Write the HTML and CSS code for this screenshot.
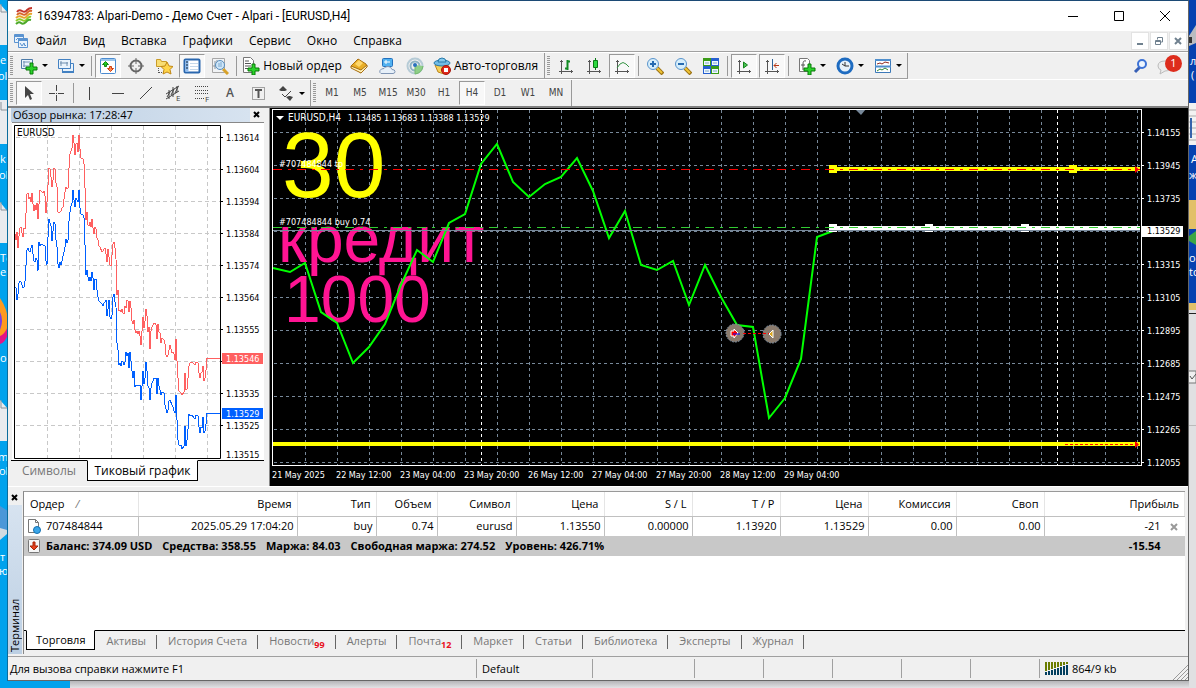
FILE: index.html
```html
<!DOCTYPE html>
<html lang="ru">
<head>
    <meta charset="utf-8">
    <title>16394783: Alpari-Demo - Демо Счет - Alpari - [EURUSD,H4]</title>
    <link rel="stylesheet" href="styles.css">
</head>
<body>
<div class="desktop">
    <svg class="desk-left" width="8" height="688">
        <rect width="8" height="688" fill="#00a2ed"/>
        <path d="M0 4l8 9v32H0zM0 100h8v44H0zM0 202l8 10v31H0zM0 400l8 9v32H0z" fill="#e9ebee"/>
        <path d="M1 4v8h6M1 102v8h6M1 202v8h6M1 400v8h6" fill="none" stroke="#8b9298"/>
        <path d="M0 298q8 12 8 24t-8 20z" fill="#ff9a1f"/><path d="M0 312q4 8 0 18z" fill="#7b3fe0"/><path d="M0 336q5-2 8-10v8q-3 9-8 10z" fill="#e31587"/>
        <path d="M0 506l8 5v18l-8 6z" fill="#4b97d8"/><path d="M0 528l7 2v4l-7 6z" fill="#d4dbe0"/>
        <g class="desk-text"><text x="0" y="64">er</text><text x="-2" y="80">olk</text><text x="0" y="163">k</text><text x="-1" y="179">olk</text><text x="0" y="262">То</text><text x="0" y="276">er</text><text x="0" y="362">ox</text><text x="-2" y="461">m</text><text x="-1" y="475">olk</text><text x="0" y="561">т</text><text x="-1" y="575">ю</text></g>
        <rect x="7" width="1" height="681" fill="#0b6c9c"/>
    </svg>

    <div class="window">
        <header class="titlebar">
            <svg class="logo" width="18" height="18" viewBox="0 0 18 18" fill="none" stroke-width="2">
                <path d="M2 5q2-3 5-1t5-1q2-2 5-2" stroke="#c3352b"/><path d="M2 8q2-3 5-1t5-1q2-3 5-2" stroke="#d9642a"/><path d="M1 11q3-3 6-1t5-1q2-3 5-2" stroke="#e7a52c"/><path d="M1 14q3-3 6-1t5-1q2-3 4-2" stroke="#8ccc29"/><path d="M1 17q3-3 5-1t5-1q2-3 5-2" stroke="#4ca82a"/>
            </svg>
            <h1>16394783: Alpari-Demo - Демо Счет - Alpari - [EURUSD,H4]</h1>
            <button class="caption" aria-label="Свернуть"><svg width="12" height="12"><path d="M1 6.500h10" stroke="#000"/></svg></button>
            <button class="caption" aria-label="Развернуть"><svg width="12" height="12"><path d="M1.500 1.500h9v9h-9z" stroke="#000" fill="none"/></svg></button>
            <button class="caption" aria-label="Закрыть"><svg width="12" height="12"><path d="M1 1l10 10M11 1L1 11" stroke="#000"/></svg></button>
        </header>

        <nav class="menubar">
            <svg width="14" height="14" viewBox="0 0 14 14" fill="#eaf3fc" stroke="#5b93d0"><path d="M.5.5h9v8h-9z"/><path d="M.5 2h9" stroke-width="2"/><path d="M2 6l2-2 2 2"/><path d="M4.500 4.500h9v9h-9z"/><path d="M4.500 6h9" stroke-width="2"/><path d="M6 9l2 3 2-3 1 3 1-1" fill="none"/></svg>
            <button>Файл</button><button>Вид</button><button>Вставка</button><button>Графики</button><button>Сервис</button><button>Окно</button><button>Справка</button>
            <div class="mdi">
                <button aria-label="Свернуть график"><svg width="10" height="10"><path d="M2 8h6" stroke="#70818f" stroke-width="2"/></svg></button>
                <button aria-label="Восстановить график"><svg width="10" height="10" fill="none" stroke="#70818f"><path d="M3.500 3.500v-2h5V6H7M1.500 4.500h5v4h-5zM1 5.500h5"/></svg></button>
                <button aria-label="Закрыть график"><svg width="10" height="10"><path d="M2 2l6 6M8 2L2 8" stroke="#70818f" stroke-width="2"/></svg></button>
            </div>
        </nav>

        <div class="toolbars">
            <div class="toolbar">
                <span class="grip"></span>
                <button class="tool drop" aria-label="Новый график"><svg width="18" height="18"><path d="M1.500 2.500h11v9h-11z" fill="#e9f3fc" stroke="#4d7ba8"/><path d="M4 4v6M3 5h7M3 9h6" stroke="#7292b5"/><path d="M10 6h3v4h4v3h-4v4h-3v-4H6v-3h4z" fill="#2bd22b" stroke="#087a08"/></svg></button>
                <button class="tool drop" aria-label="Профили"><svg width="18" height="18" fill="#e9f3fc" stroke="#4381c2"><path d="M5.500 6.500h11v9h-11z"/><path d="M5 15h12" stroke-width="2"/><path d="M1.500 2.500h12v9h-12z"/><path d="M4 4v5M3 6h8M10 5v4" stroke="#6f8eae"/></svg></button>
                <span class="sep"></span>
                <button class="tool pressed" aria-label="Обзор рынка"><svg width="18" height="18"><rect x="1.500" y="1.500" width="15" height="15" rx="1" fill="#fff" stroke="#4b8bd0"/><path d="M2 3h14" stroke="#9cc6ec" stroke-width="2"/><path d="M6.500 4.500l3 3h-2v2h-2v-2h-2z" fill="#21cd21" stroke="#118811"/><path d="M11.500 14.500l3-3h-2v-2h-2v2h-2z" fill="#ff8850" stroke="#cf3c0e"/></svg></button>
                <button class="tool" aria-label="Окно данных"><svg width="18" height="18" fill="none" stroke="#666"><circle cx="9" cy="9" r="5.500" stroke-width="2"/><path d="M9 1v6M9 11v6M1 9h6M11 9h6"/></svg></button>
                <button class="tool" aria-label="Навигатор"><svg width="18" height="18"><path d="M1.500 2.500h4l1 2h5v5h-10z" fill="#f8dd73" stroke="#c99b28"/><path d="M3.500 11v5M4 15.500h6" stroke="#555" stroke-dasharray="1 1"/><path d="M12 5l2 4 4 .5-3 3 1 4.500-4-2-4 2 1-4.500-3-3L10 9z" fill="#ffd54a" stroke="#c08716"/></svg></button>
                <button class="tool pressed" aria-label="Терминал"><svg width="18" height="18"><rect x="1.500" y="2.500" width="15" height="13" rx="1" fill="#fff" stroke="#2a67ae" stroke-width="2"/><path d="M4 3v12" stroke="#8fbcf0" stroke-width="3"/><path d="M3 5h2M3 8h2M3 11h2" stroke="#123"/><path d="M7 6.500h8M7 9.500h8M7 12.500h8" stroke="#c6d8ea"/></svg></button>
                <button class="tool" aria-label="Тестер стратегий"><svg width="18" height="18"><path d="M1.500 1.500h12v14h-12z" fill="#f1f3f5" stroke="#a7a7a7"/><path d="M4 4v8M2 9h3M6 3v4" stroke="#8b959e"/><path d="M12 12l5 5" stroke="#d7a129" stroke-width="3"/><circle cx="9" cy="8" r="4.500" fill="#cfe6f8" stroke="#578dbd"/><path d="M8 6v4M10 5v5" stroke="#7aa8ce"/></svg></button>
                <span class="sep"></span>
                <button class="tool text order"><svg width="18" height="18"><path d="M1.500.5h7l3 3v12h-10z" fill="#fff" stroke="#777"/><path d="M3 4h4M3 6.500h6M3 9h6M3 11.500h4" stroke="#555"/><path d="M10 7h3v4h4v3h-4v4h-3v-4H6v-3h4z" fill="#2bd22b" stroke="#087a08"/></svg>Новый ордер</button>
                <button class="tool" aria-label="MetaEditor"><svg width="18" height="18"><path d="M1 9L8 2l8 5 1 3-6 6z" fill="#e8ae27" stroke="#a96e10"/><path d="M1 9l10 4 6-5v2l-6 6L1 11z" fill="#fff2b9" stroke="#a96e10"/><path d="M5 7l4-4 4 3-4 4z" fill="#ffd76a"/></svg></button>
                <button class="tool" aria-label="VPS"><svg width="18" height="18"><rect x="4.500" y="1.500" width="10" height="8" rx="1" fill="#51b1f0" stroke="#2270be"/><path d="M6 5h6M8 3v4" stroke="#fff"/><path d="M3 16.500q-2-1-1-3t4-2q1-2 4-2t4 3q3 0 3 2t-2 2z" fill="#e7f0f9" stroke="#8096b5"/></svg></button>
                <button class="tool" aria-label="Сигналы"><svg width="18" height="18" fill="none"><circle cx="9" cy="9" r="7.500" stroke="#b6cbd6" stroke-width="2"/><circle cx="9" cy="9" r="4.500" stroke="#8eb3c3" stroke-width="2"/><path d="M9 8v9q7-1 8-8" fill="#8fcf88" stroke="#74ba6d"/><circle cx="9" cy="8" r="2" fill="#2b72bd"/></svg></button>
                <button class="tool text auto"><svg width="18" height="18"><path d="M2 8l14 1-5 8-6-2z" fill="#f6d057" stroke="#bd861e"/><ellipse cx="9" cy="6" rx="8" ry="3" fill="#72bce6" stroke="#287aaa"/><path d="M5 5q0-4 4-4t4 4z" fill="#84c9ed" stroke="#287aaa"/><circle cx="13" cy="13" r="4.500" fill="#df2618" stroke="#a61a10"/><path d="M11 11h4v4h-4z" fill="#fff"/></svg>Авто-торговля</button>
            </div>
            <div class="toolbar charts">
                <span class="grip"></span>
                <button class="tool" aria-label="Бары"><svg class="axes" width="18" height="18"><path d="M4.500 3v14M2 14.500h14M3 4.500h3M14.500 13v3"/><path d="M10.500 3v10M8 11.500h2M11 4.500h2" stroke="#118a22" stroke-width="2"/></svg></button>
                <button class="tool" aria-label="Свечи"><svg class="axes" width="18" height="18"><path d="M4.500 3v14M2 14.500h14M3 4.500h3M14.500 13v3"/><path d="M10.500 1v12" stroke="#087b14"/><path d="M8.500 3.500h4v7h-4z" fill="#2bd93e" stroke="#087b14"/></svg></button>
                <button class="tool pressed" aria-label="Линия"><svg class="axes" width="18" height="18"><path d="M4.500 3v14M2 14.500h14M3 4.500h3M14.500 13v3"/><path d="M4 11l3-4q3-3 6 0l3 3" stroke="#369545"/></svg></button>
                <span class="sep"></span>
                <button class="tool" aria-label="Увеличить"><svg width="18" height="18"><path d="M11 11l6 6" stroke="#9d7416" stroke-width="4"/><path d="M11 11l5 5" stroke="#f0c436" stroke-width="2"/><circle cx="7" cy="7" r="5.500" fill="#d6eefb" stroke="#5a94cc"/><path d="M7 4v6M4 7h6" stroke="#266bb1" stroke-width="2"/></svg></button>
                <button class="tool" aria-label="Уменьшить"><svg width="18" height="18"><path d="M11 11l6 6" stroke="#9d7416" stroke-width="4"/><path d="M11 11l5 5" stroke="#f0c436" stroke-width="2"/><circle cx="7" cy="7" r="5.500" fill="#d6eefb" stroke="#5a94cc"/><path d="M4 7h6" stroke="#266bb1" stroke-width="2"/></svg></button>
                <button class="tool" aria-label="Окна мозаикой"><svg width="18" height="18"><path d="M1 1h8v8H1zM9 9h8v8H9z" fill="#3b9b18"/><path d="M9 1h8v8H9zM1 9h8v8H1z" fill="#265fd0"/><path d="M2 4h6v4H2zM10 4h6v4h-6zM2 12h6v4H2zM10 12h6v4h-6z" fill="#eef7ff"/><path d="M3 6h4M11 6h4M3 14h4M11 14h4" stroke="#80a8c8"/></svg></button>
                <span class="sep"></span>
                <button class="tool pressed" aria-label="Автопрокрутка"><svg class="axes" width="18" height="18"><path d="M4.500 3v14M2 14.500h14M3 4.500h3M14.500 13v3"/><path d="M8.500 5v6l4-3z" fill="#49c252" stroke="#16851f"/></svg></button>
                <button class="tool pressed" aria-label="Сдвиг графика"><svg class="axes" width="18" height="18"><path d="M4.500 3v14M2 14.500h14M3 4.500h3M14.500 13v3"/><path d="M9.500 2v11" stroke="#2d6396"/><path d="M11 8.500h5M13.500 6L11 8.500l2.500 2.500" stroke="#b73714"/></svg></button>
                <span class="sep"></span>
                <button class="tool drop" aria-label="Индикаторы"><svg width="18" height="18"><path d="M1.500 1.500h8l2 2v11h-10z" fill="#fff" stroke="#777"/><path d="M8 4q-3-1-3 3v6M3 8h4" fill="none" stroke="#555"/><path d="M10 7h3v4h4v3h-4v4h-3v-4H6v-3h4z" fill="#2bd22b" stroke="#087a08"/></svg></button>
                <button class="tool drop" aria-label="Периоды"><svg width="18" height="18"><circle cx="9" cy="9" r="7" fill="#e6f1fa" stroke="#1e6bc0" stroke-width="3"/><path d="M9 5v4h4M6 7l3 2" fill="none" stroke="#333"/></svg></button>
                <button class="tool drop" aria-label="Шаблоны"><svg width="18" height="18"><path d="M1.500 2.500h15v13h-15z" fill="#fff" stroke="#3c79b8"/><path d="M1 3h16M1 9.500h16" stroke="#508fcd" stroke-width="2"/><path d="M3 7l3-1 2 1 3-2 4 1" fill="none" stroke="#8e2b20"/><path d="M3 14l3-2 2 1 3-2 3 2" fill="none" stroke="#2e8534"/></svg></button>
            </div>
            <div class="tray">
                <button aria-label="Поиск"><svg width="16" height="16"><path d="M7 9l-5 5" stroke="#375fb5" stroke-width="3"/><circle cx="9" cy="6" r="4" fill="#edf5ff" stroke="#3c72d6" stroke-width="2"/></svg></button>
                <button class="news" aria-label="Сообщения"><svg width="18" height="18"><path d="M8 4q6 0 6 5t-6 5l-5 3 1-4q-3-1-3-4 0-5 7-5z" fill="#ececec" stroke="#bbb"/></svg><span>1</span></button>
            </div>
        </div>

        <div class="toolbars">
            <div class="toolbar second">
                <span class="grip"></span>
                <button class="tool pressed" aria-label="Курсор"><svg width="18" height="18"><path d="M5 2v12l3-3 2 5 2-1-2-5h4z" fill="#444"/></svg></button>
                <button class="tool" aria-label="Перекрестие"><svg width="18" height="18" stroke="#444"><path d="M8.500 1v6M8.500 11v6M1 9.500h6M10 9.500h6M8 9.500h1"/></svg></button>
                <span class="sep"></span>
                <button class="tool" aria-label="Вертикальная линия"><svg width="18" height="18"><path d="M8.500 3v13" stroke="#444"/></svg></button>
                <button class="tool" aria-label="Горизонтальная линия"><svg width="18" height="18"><path d="M3 9.500h12" stroke="#444"/></svg></button>
                <button class="tool" aria-label="Трендовая линия"><svg width="18" height="18"><path d="M3 15L15 3" stroke="#444"/></svg></button>
                <button class="tool" aria-label="Канал"><svg width="18" height="18" stroke="#444"><path d="M1 10L14 2M1 15l13-8M4 6v9M8 3v10M12 2v6"/><path d="M2 13l3-5M6 11l3-6M10 9l3-6"/><text x="11" y="17" class="glyph">E</text></svg></button>
                <button class="tool" aria-label="Фибоначчи"><svg width="18" height="18"><path d="M2 2.500h14M2 6.500h14M2 9.500h14M2 14.500h9" stroke="#444" stroke-dasharray="1 1"/><text x="12" y="18" class="glyph">F</text></svg></button>
                <button class="tool letter">A</button>
                <button class="tool" aria-label="Метка"><svg width="18" height="18"><path d="M3.500 3.500h12v12h-12z" fill="none" stroke="#555" stroke-dasharray="1 1"/><path d="M6 6h7M9.500 6v8" stroke="#555" stroke-width="2"/></svg></button>
                <button class="tool drop" aria-label="Стрелки"><svg width="18" height="18" fill="#444"><path d="M2 6l4-4 4 4-2 1H4zM9 13l3-1h1l3 1-3 4z"/><path d="M5 10l3 3 6-6" fill="none" stroke="#444"/></svg></button>
            </div>
            <div class="toolbar second periods">
                <span class="grip"></span>
                <button class="tool">M1</button><button class="tool">M5</button><button class="tool">M15</button><button class="tool">M30</button><button class="tool">H1</button><button class="tool pressed">H4</button><button class="tool">D1</button><button class="tool">W1</button><button class="tool">MN</button>
            </div>
        </div>

        <main class="workspace">
            <section class="watch">
                <div class="watch-head"><h2>Обзор рынка: 17:28:47</h2><button class="close" aria-label="Закрыть обзор рынка"><svg width="8" height="8"><path d="M1 1l5 5M6 1L1 6" stroke="#000" stroke-width="2"/></svg></button></div>
                <svg class="ticks" width="252" height="338">
                    <g transform="translate(-12 -123)">
                        <path class="tick-grid" d="M16 137.500h204M16 169.500h204M16 201.500h204M16 233.500h204M16 265.500h204M16 297.500h204M16 329.500h204M16 361.500h204M16 393.500h204M16 425.500h204M47.500 126v332M79.500 126v332M111.500 126v332M143.500 126v332M175.500 126v332M207.500 126v332"/>
                        <polyline class="ask" points="15,234 16,240 17,232 18,248 19,236 20,228 21,227 22,233 23,237 24,228 25,229 26,213 27,194 28,193 29,199 30,197 31,202 32,193 33,204 34,211 35,205 36,210 37,203 38,219 39,204 40,190 42,192 43,193 44,191 45,196 46,213 47,202 48,185 49,168 50,169 51,177 52,187 53,180 54,168 55,169 56,183 57,187 58,212 59,213 61,211 62,208 63,207 64,199 65,192 66,187 67,189 68,188 69,168 70,154 71,151 72,148 73,135 74,143 75,155 76,144 77,143 78,152 79,135 80,149 81,158 83,159 84,164 85,188 86,220 87,212 88,225 89,226 90,222 91,227 92,219 93,228 94,234 95,227 96,229 97,238 98,240 99,246 100,247 102,252 103,251 104,249 105,248 106,254 107,262 108,249 109,257 110,265 111,266 112,255 113,244 114,242 115,248 116,259 117,295 118,290 119,311 120,310 121,312 122,309 123,313 124,314 125,306 126,308 127,300 128,301 129,312 130,301 131,308 132,321 133,324 134,320 135,330 136,333 137,331 138,334 139,331 140,336 141,345 142,331 143,317 144,328 145,321 146,309 147,316 148,332 149,327 150,349 151,331 152,327 153,325 154,323 155,323 156,325 157,339 158,324 159,332 160,333 161,343 162,338 163,339 164,340 165,344 166,355 167,357 168,355 169,350 170,345 171,349 172,353 173,352 174,354 175,360 176,339 177,361 178,378 179,391 181,393 182,395 184,392 185,373 186,390 187,389 188,378 189,366 190,363 191,362 193,363 195,365 196,362 198,363 199,373 200,378 201,373 202,372 203,366 204,381 205,378 206,370 207,358 220,358"/>
                        <polyline class="bid" points="15,287 16,288 17,300 18,294 19,283 20,281 21,282 22,285 23,288 24,287 25,281 26,265 27,250 28,248 29,251 30,252 31,248 32,245 33,254 34,261 35,262 36,258 37,260 38,271 39,242 40,246 41,244 45,246 46,261 47,265 48,237 49,219 50,223 51,226 52,241 53,231 54,222 55,224 56,240 57,247 58,264 59,268 60,262 61,265 62,261 64,252 65,247 66,239 67,243 68,240 69,221 70,212 71,206 72,203 73,190 74,200 75,207 76,198 77,200 78,202 79,190 80,208 81,214 83,215 84,218 85,245 86,275 87,270 88,277 89,281 90,277 91,281 92,272 93,278 94,290 95,279 96,279 97,290 98,297 99,301 100,302 102,304 103,306 104,303 105,302 106,300 107,316 108,309 109,300 110,317 111,319 112,315 113,297 114,294 115,302 116,307 117,343 118,350 119,365 120,363 121,366 122,361 123,362 124,365 125,362 126,352 127,356 128,353 129,368 130,352 131,361 132,371 133,378 134,371 135,387 136,385 140,385 141,400 142,386 143,371 144,384 145,378 146,362 147,371 148,386 149,388 150,400 151,388 152,383 153,381 154,378 156,378 157,394 158,378 159,386 160,390 161,395 162,392 164,393 165,405 166,409 167,413 168,410 169,401 170,400 172,405 173,407 174,411 175,413 176,395 177,420 178,440 179,445 181,445 182,449 184,446 185,426 186,446 187,440 188,429 189,414 190,416 192,415 195,419 196,415 198,416 199,427 200,433 201,427 202,428 203,417 204,433 205,431 206,424 207,413 220,413"/>
                        <path d="M14.500 125.500h206v333h-206z" fill="none" stroke="#000"/>
                        <path d="M221 137.500h2M221 169.500h2M221 201.500h2M221 233.500h2M221 265.500h2M221 297.500h2M221 329.500h2M221 361.500h2M221 393.500h2M221 425.500h2" stroke="#000"/>
                        <g class="small">
                            <text x="17" y="136" class="symbol">EURUSD</text>
                            <text x="226" y="141">1.13614</text><text x="226" y="173">1.13604</text><text x="226" y="205">1.13594</text><text x="226" y="237">1.13584</text><text x="226" y="269">1.13574</text><text x="226" y="301">1.13564</text><text x="226" y="333">1.13555</text><text x="226" y="397">1.13535</text><text x="226" y="429">1.13525</text><text x="226" y="458">1.13515</text>
                            <rect x="222" y="353" width="41" height="11" fill="#ff6060"/><text x="226" y="362" fill="#fff">1.13546</text>
                            <rect x="222" y="408" width="41" height="11" fill="#0060ff"/><text x="226" y="417" fill="#fff">1.13529</text>
                        </g>
                    </g>
                </svg>
                <div class="watch-tabs"><button>Символы</button><button class="active">Тиковый график</button></div>
            </section>

            <section class="chart">
                <div class="plot">
                    <svg width="100%" height="357">
                        <g transform="translate(-272 -109)">
                            <path class="grid" d="M305.500 110v355M337.500 110v355M369.500 110v355M401.500 110v355M433.500 110v355M465.500 110v355M497.500 110v355M529.500 110v355M561.500 110v355M593.500 110v355M625.500 110v355M657.500 110v355M689.500 110v355M721.500 110v355M753.500 110v355M785.500 110v355M817.500 110v355M849.500 110v355M881.500 110v355M913.500 110v355M945.500 110v355M977.500 110v355M1009.500 110v355M1041.500 110v355M1073.500 110v355M1105.500 110v355M1137.500 110v355"/>
                            <path class="grid" d="M274 132.500h866M274 165.500h866M274 198.500h866M274 231.500h866M274 264.500h866M274 297.500h866M274 330.500h866M274 363.500h866M274 396.500h866M274 429.500h866M274 462.500h866"/>
                            <path class="week" d="M481.500 110v355M1057.500 110v355"/>
                            <text x="282" y="197" class="big yellow">30</text>
                            <text x="278" y="262" class="mid">кредит</text>
                            <text x="284" y="322" class="mid">1000</text>
                            <path d="M273 444h867M832 169h308" stroke="#ff0" stroke-width="4"/>
                            <path d="M829 165h8v8h-8zM1069 165h8v8h-8z" fill="#ff0"/>
                            <polyline class="price" points="273,268 290,272 305,263 321,312 337,323 353,363 369,347 385,324 401,285 417,250 433,262 449,223 465,214 481,164 497,144 513,182 529,197 545,184 561,177 577,158 593,191 609,238 625,211 641,265 657,270 673,261 689,305 705,265 721,297 737,325 753,327 769,418 785,398 801,359 817,237 833,231"/>
                            <path d="M829 224h8v8h-8zM925 224h8v8h-8zM1021 224h8v8h-8z" fill="#fff"/>
                            <path d="M832 228h308" stroke="#fff" stroke-width="4"/>
                            <path d="M273 230.500h867" stroke="#778899"/>
                            <path class="dashdot" d="M273 169.500h867" stroke="#f00"/>
                            <path class="dashdot" d="M273 227.500h867" stroke="#32cd32"/>
                            <path d="M1065 444.500h72" stroke="#f00" stroke-dasharray="3 2"/>
                            <path d="M1135 166l4 3.500-4 3.500zM1135 441l4 3.500-4 3.500z" fill="#f00"/>
                            <g fill="#8b7b6d" stroke="#8293a4" stroke-dasharray="2 1"><circle cx="735" cy="333" r="9"/><circle cx="772" cy="334" r="9"/></g>
                            <path d="M743 333.500h26" stroke="#f00" stroke-dasharray="3 2"/>
                            <path d="M731 331h3v-2l4 4-4 5v-2h-3z" fill="#f00" stroke="#fff"/><path d="M733 334h7" stroke="#00f"/>
                            <path d="M773 330v8l-4-4z" fill="#daa520" stroke="#fff"/>
                            <path d="M855 109h11l-5 6z" fill="#778899"/>
                            <path d="M276 116h8l-4 4z" fill="#fff"/>
                            <g class="small light">
                                <text x="288" y="121" class="symbol">EURUSD,H4</text><text x="348" y="121">1.13485 1.13683 1.13388 1.13529</text>
                                <text x="279" y="167">#707484844 tp</text>
                                <text x="279" y="225">#707484844 buy 0.74</text>
                            </g>
                        </g>
                        <rect width="100%" height="100%" fill="none" stroke="#fff" stroke-width="2"/>
                    </svg>
                </div>
                <div class="scale"><span>1.14155</span><span>1.13945</span><span>1.13735</span><span class="current"><b>1.13529</b></span><span>1.13315</span><span>1.13105</span><span>1.12895</span><span>1.12685</span><span>1.12475</span><span>1.12265</span><span>1.12055</span></div>
                <div class="times"><span>21 May 2025</span><span>22 May 12:00</span><span>23 May 04:00</span><span>23 May 20:00</span><span>26 May 12:00</span><span>27 May 04:00</span><span>27 May 20:00</span><span>28 May 12:00</span><span>29 May 04:00</span></div>
            </section>
        </main>

        <section class="terminal">
            <div class="term-side"><button class="close" aria-label="Закрыть терминал"><svg width="8" height="8"><path d="M1 1l5 5M6 1L1 6" stroke="#000" stroke-width="2"/></svg></button><h2>Терминал</h2></div>
            <div class="term-body">
                <div class="term-list">
                    <table>
                        <colgroup><col class="c-order"><col class="c-time"><col class="c-type"><col class="c-lots"><col class="c-type"><col class="c-num"><col class="c-num"><col class="c-num"><col class="c-num"><col class="c-num"><col class="c-num"><col></colgroup>
                        <thead><tr><th>Ордер <i>/</i></th><th>Время</th><th>Тип</th><th>Объем</th><th>Символ</th><th>Цена</th><th>S / L</th><th>T / P</th><th>Цена</th><th>Комиссия</th><th>Своп</th><th>Прибыль</th></tr></thead>
                        <tbody>
                            <tr><td><div class="cell"><svg width="15" height="16"><path d="M1.500 1.500h7l3 3v10h-10z" fill="#fff" stroke="#777"/><path d="M8.500 1.500v3h3" fill="none" stroke="#777"/><circle cx="10" cy="12" r="3.500" fill="#3aa5e8" stroke="#1470b0"/></svg>707484844</div></td><td>2025.05.29 17:04:20</td><td>buy</td><td>0.74</td><td>eurusd</td><td>1.13550</td><td>0.00000</td><td>1.13920</td><td>1.13529</td><td>0.00</td><td>0.00</td><td class="profit">-21<button aria-label="Закрыть ордер"><svg width="9" height="9"><path d="M1 1l6 6M7 1L1 7" stroke="#999" stroke-width="2"/></svg></button></td></tr>
                            <tr class="total"><td colspan="11"><div class="cell"><svg width="15" height="16"><rect x="1.500" y="1.500" width="11" height="13" rx="1" fill="#f6f6f6" stroke="#777"/><path d="M6 4h2v4h3l-4 4-4-4h3z" fill="#e8401c" stroke="#a62508"/></svg><span>Баланс: 374.09 USD</span><span>Средства: 358.55</span><span>Маржа: 84.03</span><span>Свободная маржа: 274.52</span><span>Уровень: 426.71%</span></div></td><td class="profit">-15.54</td></tr>
                        </tbody>
                    </table>
                </div>
                <div class="term-tabs">
                    <button class="active">Торговля</button><button>Активы</button><button>История Счета</button><button>Новости<sub>99</sub></button><button>Алерты</button><button>Почта<sub>12</sub></button><button>Маркет</button><button>Статьи</button><button>Библиотека</button><button>Эксперты</button><button>Журнал</button>
                </div>
            </div>
        </section>

        <footer class="status">
            <span class="help">Для вызова справки нажмите F1</span><span class="profile">Default</span><span class="s1"></span><span class="s2"></span><span class="s2"></span><span class="s2"></span><span class="s2"></span><span class="s2"></span>
            <span class="net"><svg width="23" height="13"><path d="M1 0v9M4 0v8M7 0v7M10 0v6M13 0v5M16 0v4M19 0v3M22 0v2" stroke="#6b7d00" stroke-width="2"/><path d="M1 10v3M4 9v4M7 8v5M10 7v6M13 6v7M16 5v8M19 4v9M22 3v10" stroke="#04405f" stroke-width="2"/></svg>864/9 kb</span>
            <svg class="sizer" width="15" height="15"><path d="M0 15L15 0M4 15L15 4M8 15l7-7M12 15l3-3" stroke="#999"/></svg>
        </footer>
    </div>

    <svg class="desk-right" width="7" height="688">
        <rect width="7" height="688" fill="#0642b0"/>
        <path d="M0 36l7-11v18l-7 3z" fill="#b9bcc0"/><path d="M0 37h3v6H0z" fill="#333"/>
        <path d="M0 103h7v42H0z" fill="#f2f2f2"/><path d="M0 110h7M0 116h7M0 122h7M0 128h7M0 134h7M0 140h7" stroke="#aaa"/><path d="M1 118h2v20H1z" fill="#3564ac"/>
        <path d="M0 200h7v29H0z" fill="#e2c069"/><path d="M0 236l7-5v14l-7-4z" fill="#3aa644"/>
        <path d="M0 303h7v7H0z" fill="#e2c069"/><path d="M0 310h7v378H0z" fill="#e0e0e2"/><path d="M0 313.500h7" stroke="#222"/><path d="M0 425.500h7" stroke="#bbb"/>
        <path d="M0 371h7v12H0" fill="#f0f0f0" stroke="#777"/><path d="M1 376l2 3 4-5" fill="none" stroke="#555"/>
        <g class="desk-text"><text x="1" y="65">л</text><text x="2" y="79">(</text><text x="2" y="163">A</text><text x="0" y="179">ж</text><text x="0" y="262">о</text><text x="0" y="276">tc</text></g>
    </svg>
    <div class="desk-bottom"></div>
</div>
</body>
</html>
```
FILE: styles.css
```css
* {
    box-sizing: border-box;
}
body {
    margin: 0;
    font-family: "Open Sans", "Noto Sans", sans-serif;
    font-size: 11px;
    line-height: 16px;
    color: #000;
    overflow: hidden;
}
h1, h2 {
    margin: 0;
    font-size: 11px;
    font-weight: normal;
}
button {
    padding: 0;
    border: none;
    background: none;
    font: inherit;
    color: inherit;
}
svg {
    display: block;
    flex: none;
}

/* desktop */
.desktop {
    display: grid;
    grid-template-columns: 8px 1fr 7px;
    grid-template-rows: 1fr 7px;
    height: 100vh;
    background: #e2e2e5;
}
.desk-left, .desk-right {
    grid-row: 1 / 3;
}
.desk-left {
    grid-column: 1;
}
.desk-right {
    grid-column: 3;
}
.desk-bottom {
    grid-column: 2;
    grid-row: 2;
    background: linear-gradient(to right, #00a2ed 62px, transparent 62px), linear-gradient(#b5b5b8, #e2e2e5);
}
.desk-text {
    font-size: 11px;
    fill: #fff;
}
.window {
    grid-column: 2;
    grid-row: 1;
    display: flex;
    flex-direction: column;
    min-width: 0;
    min-height: 0;
    background: #f0f0f0;
    border-top: 1px solid #1c4a75;
    border-right: 1px solid #666;
    border-bottom: 1px solid #666;
}

/* title and menu */
.titlebar {
    display: flex;
    align-items: center;
    height: 30px;
    padding-left: 7px;
    background: #fff;
}
.titlebar h1 {
    flex: 1;
    padding-left: 4px;
    font-family: Roboto, "Open Sans", sans-serif;
    font-size: 12px;
}
.caption {
    width: 46px;
    height: 28px;
    display: flex;
    align-items: center;
    justify-content: center;
}
.menubar {
    display: flex;
    align-items: center;
    height: 21px;
    padding-left: 6px;
    border-bottom: 1px solid #a0a0a0;
    font-size: 12px;
}
.menubar > button {
    padding: 0 8px;
}
.mdi {
    display: flex;
    margin-left: auto;
    padding-right: 1px;
    gap: 1px;
}
.mdi button {
    display: flex;
    align-items: center;
    justify-content: center;
    width: 18px;
    height: 18px;
    background: #fff;
    border: 1px solid #e3e3e3;
}

/* toolbars */
.toolbars {
    display: flex;
    height: 27px;
    border-top: 1px solid #fff;
}
.toolbar {
    display: flex;
    align-items: center;
    padding: 0 2px;
    border-right: 1px solid #999;
    border-bottom: 1px solid #a0a0a0;
}
.second {
    padding-right: 1px;
    border-bottom: none;
}
.grip {
    width: 3px;
    height: 20px;
    margin-right: 2px;
    background: repeating-linear-gradient(#999 0 1px, #f0f0f0 1px 2px);
}
.tool {
    display: flex;
    align-items: center;
    justify-content: center;
    width: 26px;
    height: 24px;
    margin: 0 1px;
}
.pressed {
    background: #f8f8f8;
    border: 1px solid;
    border-color: #999 #fff #fff #999;
}
.drop {
    width: 35px;
    justify-content: flex-start;
    padding-left: 4px;
    gap: 4px;
}
.drop::after {
    content: "";
    border: 3px solid transparent;
    border-top-color: #000;
    border-bottom: none;
}
.charts .drop {
    width: 36px;
    padding-left: 6px;
}
.text {
    gap: 3px;
    font-size: 12px;
    white-space: nowrap;
}
.order {
    width: 104px;
}
.auto {
    width: 111px;
}
.sep {
    width: 1px;
    height: 20px;
    margin: 0 2px;
    background: #999;
}
.axes {
    fill: none;
    stroke: #555;
}
.glyph {
    font-size: 8px;
    fill: #444;
    stroke: none;
}
.letter {
    font-weight: 600;
    font-size: 12px;
    color: #555;
}
.periods {
    font-family: "DejaVu Sans Condensed", "DejaVu Sans", sans-serif;
    font-size: 10px;
    color: #444;
}
.tray {
    display: flex;
    align-items: center;
    margin-left: auto;
    padding-right: 6px;
    gap: 8px;
}
.news {
    position: relative;
    width: 25px;
}
.news span {
    position: absolute;
    right: 0;
    top: -2px;
    width: 17px;
    height: 17px;
    border-radius: 9px;
    background: #dd2c1c;
    color: #fff;
}

/* market watch */
.workspace {
    display: flex;
    height: 380px;
    border-top: 2px solid #808080;
}
.watch {
    width: 262px;
    flex: none;
    display: flex;
    flex-direction: column;
    padding: 0 5px 0 3px;
    border-right: 1px solid #888;
}
.watch-head {
    display: flex;
    align-items: center;
    height: 14px;
}
.watch-head h2 {
    flex: 1;
    padding-left: 2px;
    line-height: 14px;
    background: linear-gradient(to right, #bccfe3, #d7e3f0);
}
.close {
    display: flex;
    align-items: center;
    justify-content: center;
    width: 14px;
    height: 14px;
}
.ticks {
    margin-left: 1px;
    background: #fff;
    border-top: 1px solid #888;
}
.tick-grid {
    stroke: #c8c8c8;
    stroke-dasharray: 4 3;
}
.ask, .bid {
    fill: none;
    stroke: #ff6060;
    shape-rendering: crispEdges;
}
.bid {
    stroke: #0060ff;
}
.small {
    font-family: "DejaVu Sans Condensed", "DejaVu Sans", sans-serif;
    font-size: 9px;
}
.symbol {
    font-size: 10px;
}
.light {
    fill: #fff;
}
.watch-tabs {
    display: flex;
    height: 21px;
    border-top: 1px solid #000;
    font-size: 12px;
    color: #777;
}
.watch-tabs button {
    width: 76px;
}
.watch-tabs .active {
    width: 111px;
    margin-top: -1px;
    background: #fff;
    border: 1px solid #000;
    border-top-color: #fff;
    color: #000;
}

/* chart */
.chart {
    flex: 1;
    min-width: 0;
    display: grid;
    grid-template-columns: 1fr 46px;
    grid-template-rows: 357px 1fr;
    padding: 1px 0 0 2px;
    background: #000;
    color: #fff;
    font-family: "DejaVu Sans Condensed", "DejaVu Sans", sans-serif;
    font-size: 9px;
}
.plot {
    min-width: 0;
}
.grid, .week {
    fill: none;
    stroke: #778899;
    stroke-dasharray: 3 3;
}
.week {
    stroke: #fff;
}
.big, .mid {
    font-family: "Liberation Sans", Arial, sans-serif;
    font-size: 93px;
}
.mid {
    font-size: 66px;
    fill: #ff1493;
}
.yellow {
    fill: #ff0;
}
.price {
    fill: none;
    stroke: #0f0;
    stroke-width: 2;
}
.dashdot {
    stroke-dasharray: 9 6 3 6;
}
.scale {
    grid-column: 2;
    grid-row: 1 / 3;
    padding-top: 7px;
}
.scale span {
    display: flex;
    align-items: center;
    height: 33px;
}
.scale span::before {
    content: "";
    width: 2px;
    height: 1px;
    margin-right: 3px;
    background: #fff;
}
.scale .current::before {
    display: none;
}
.scale b {
    padding: 0 3px 0 5px;
    line-height: 11px;
    font-weight: normal;
    background: #fff;
    color: #000;
}
.times {
    display: flex;
    overflow: hidden;
}
.times span {
    flex: none;
    width: 64px;
    line-height: 18px;
    white-space: nowrap;
}

/* terminal */
.terminal {
    flex: 1;
    min-height: 0;
    display: flex;
    padding: 4px 3px 2px 0;
    border-top: 1px solid #fff;
}
.term-side {
    width: 15px;
    flex: none;
    display: flex;
    flex-direction: column;
}
.term-side h2 {
    flex: 1;
    margin-right: 1px;
    padding-top: 2px;
    line-height: 14px;
    writing-mode: vertical-rl;
    transform: rotate(180deg);
    background: linear-gradient(to bottom, #bccfe3, #d7e3f0);
}
.term-body {
    flex: 1;
    min-width: 0;
    display: flex;
    flex-direction: column;
    border-left: 1px solid #888;
    border-top: 1px solid #999;
}
.term-list {
    flex: 1;
    min-height: 0;
    background: #fff;
}
table {
    width: 100%;
    border-collapse: collapse;
    table-layout: fixed;
}
.c-order {
    width: 114px;
}
.c-time {
    width: 159px;
}
.c-type {
    width: 79px;
}
.c-lots {
    width: 61px;
}
.c-num {
    width: 88px;
}
th {
    height: 24px;
    padding: 0 5px;
    font-weight: normal;
    text-align: right;
    border-right: 1px solid #e5e5e5;
    border-bottom: 1px solid #c0c0c0;
}
th:first-child {
    padding-left: 6px;
    text-align: left;
}
th i {
    padding-left: 8px;
    color: #777;
}
td {
    height: 20px;
    padding: 0 3px;
    text-align: right;
    border-right: 1px solid #c0c0c0;
}
td:last-child {
    border-right: none;
}
.cell {
    display: flex;
    align-items: center;
    gap: 4px;
}
.profit {
    padding-right: 24px;
    position: relative;
}
.profit button {
    position: absolute;
    right: 6px;
    top: 6px;
}
.total {
    background: #c8c8c8;
    font-weight: bold;
}
.total td {
    border-right: none;
}
.total span {
    margin-right: 6px;
    white-space: nowrap;
}
.term-tabs {
    display: flex;
    height: 24px;
    padding-left: 2px;
    border-top: 1px solid #000;
    color: #777;
}
.term-tabs button {
    height: 20px;
    padding: 0 11px;
    background: linear-gradient(#666, #666) right 4px / 1px 14px no-repeat;
    white-space: nowrap;
}
.term-tabs .active {
    margin-top: -1px;
    padding: 0 9px;
    background: #fff;
    border: 1px solid #000;
    border-top-color: #fff;
    color: #000;
}
sub {
    font-size: 9px;
    font-weight: bold;
    line-height: 0;
    color: #e81123;
}

/* status bar */
.status {
    display: flex;
    align-items: center;
    height: 24px;
    padding-left: 2px;
    border-top: 1px solid #a0a0a0;
}
.status > span {
    flex: none;
    height: 19px;
    line-height: 19px;
    border-right: 1px solid #a0a0a0;
}
.status .help {
    flex: 1;
}
.status .profile {
    width: 116px;
    padding-left: 5px;
}
.status .s1 {
    width: 102px;
}
.status .s2 {
    width: 69px;
}
.status .net {
    width: 136px;
    display: flex;
    align-items: center;
    gap: 4px;
    padding-left: 5px;
    border: none;
}
.sizer {
    align-self: flex-end;
    margin-left: -3px;
}
```
